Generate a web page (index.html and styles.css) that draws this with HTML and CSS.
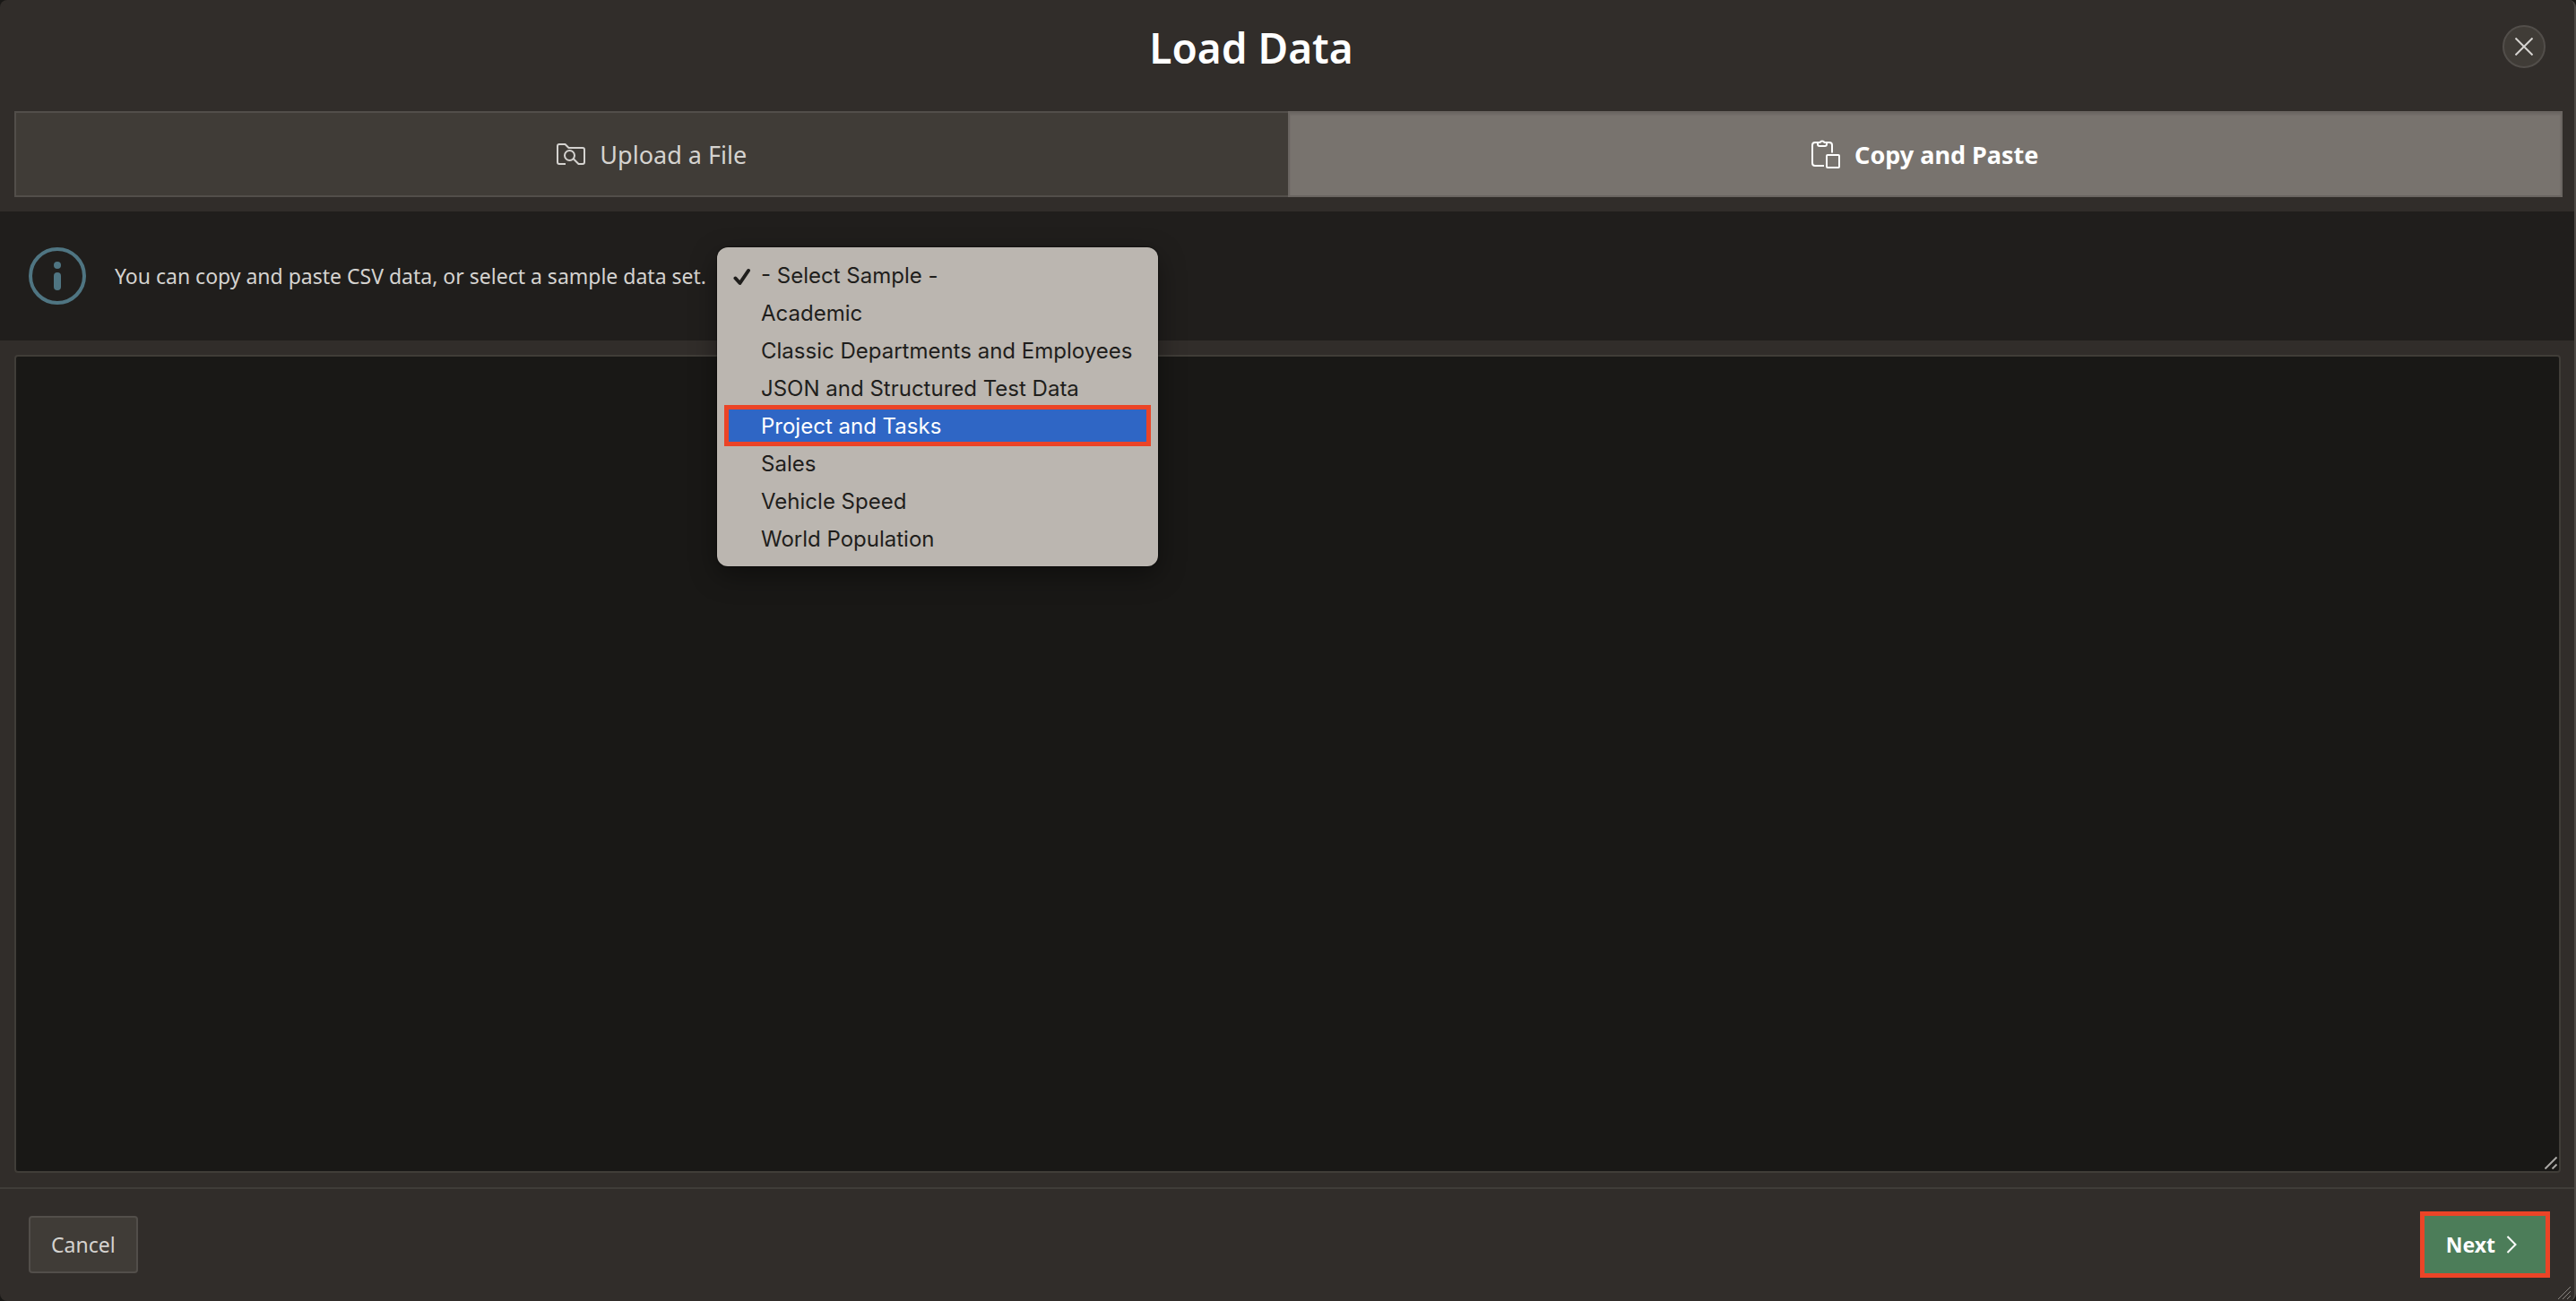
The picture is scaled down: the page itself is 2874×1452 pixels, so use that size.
FILE: index.html
```html
<!DOCTYPE html>
<html lang="en">
<head>
<meta charset="utf-8">
<title>Load Data</title>
<link rel="stylesheet" href="styles.css">
</head>
<body>
<main class="dialog" role="dialog" aria-labelledby="title">
  <header class="header">
    <h1 class="title" id="title">Load Data</h1>
    <button class="close" type="button" aria-label="Close">
      <svg width="20" height="20" viewBox="0 0 20 20" fill="none" stroke="currentColor" stroke-width="2"><path d="M0.5 0.5 19.5 19.5M19.5 0.5 0.5 19.5"/></svg>
    </button>
  </header>

  <div class="tabs" role="tablist">
    <button class="tab" type="button" role="tab" aria-selected="false">
      <svg width="32" height="32" viewBox="0 0 32 32" fill="none" stroke="currentColor" stroke-width="2" stroke-linejoin="round"><path d="M10 27H3a2 2 0 0 1-2-2V7a2 2 0 0 1 2-2h6.500l4 4H29a2 2 0 0 1 2 2v14a2 2 0 0 1-2 2h-4.500l-6-6"/><circle cx="14.500" cy="17.500" r="5.500"/></svg>
      <span>Upload a File</span>
    </button>
    <button class="tab tab-active" type="button" role="tab" aria-selected="true">
      <svg width="32" height="32" viewBox="0 0 32 32" fill="none" stroke="currentColor" stroke-width="2" stroke-linejoin="round"><path d="M14 29H4a3 3 0 0 1-3-3V6a3 3 0 0 1 3-3h3M17 3h3a3 3 0 0 1 3 3v8.500"/><path d="M7 3h2.500a2.800 2.800 0 0 1 5 0H17v2a2 2 0 0 1-2 2H9a2 2 0 0 1-2-2z"/><rect x="17" y="17" width="14" height="14" rx="1"/></svg>
      <span>Copy and Paste</span>
    </button>
  </div>

  <section class="notice">
    <svg class="info" width="64" height="64" viewBox="0 0 64 64" fill="none"><circle cx="32" cy="32" r="30" stroke="currentColor" stroke-width="4"/><circle cx="32" cy="20" r="4" fill="currentColor"/><rect x="28" y="28" width="8" height="20" rx="4" fill="currentColor"/></svg>
    <label class="notice-text" for="sample">You can copy and paste CSV data, or select a sample data set.</label>
    <div class="picker">
      <select class="menu" id="sample" size="8">
        <option>- Select Sample -</option>
        <option>Academic</option>
        <option>Classic Departments and Employees</option>
        <option>JSON and Structured Test Data</option>
        <option class="current">Project and Tasks</option>
        <option>Sales</option>
        <option>Vehicle Speed</option>
        <option>World Population</option>
      </select>
      <svg class="check" width="20" height="20" viewBox="0 0 20 20" fill="none" stroke="currentColor" stroke-width="4" stroke-linecap="round" stroke-linejoin="round"><path d="M2.500 11.500 7.500 17 17 3"/></svg>
    </div>
  </section>

  <div class="editor">
    <textarea class="data" aria-label="CSV data"></textarea>
    <svg class="grip" width="14" height="14" viewBox="0 0 14 14" stroke="currentColor" stroke-width="2"><path d="M0.500 13.500 13.500 0.500M8.500 13.500 13.500 8.500"/></svg>
  </div>

  <footer class="footer">
    <button class="button" type="button">Cancel</button>
    <button class="button button-next" type="button">Next
      <svg width="12" height="20" viewBox="0 0 12 20" fill="none" stroke="currentColor" stroke-width="2"><path d="M1.500 1 10.500 10 1.500 19"/></svg>
    </button>
    <svg class="corner" width="14" height="14" viewBox="0 0 14 14" stroke="currentColor" stroke-width="1"><path d="M0 14 14 0M5 14 14 5M10 14 14 10"/></svg>
  </footer>
</main>
</body>
</html>
```
FILE: styles.css
```css
* {
  box-sizing: border-box;
}

body {
  margin: 0;
  background: #191816;
  font-family: "Noto Sans", sans-serif;
  font-size: 23px;
  color: #d5d3d0;
}

button,
select,
textarea {
  font: inherit;
  color: inherit;
}

svg {
  flex: none;
}

.dialog {
  display: flex;
  flex-direction: column;
  min-height: 100vh;
  border-right: 2px solid #4d4945;
  border-radius: 8px;
  background: #312d2a;
}

.header {
  position: relative;
  display: flex;
  justify-content: center;
  align-items: center;
  height: 106px;
  padding-right: 80px;
  margin-bottom: 18px;
}

.title {
  margin: 0;
  font-size: 46px;
  font-weight: 600;
  line-height: 64px;
  color: #fff;
}

.close {
  position: absolute;
  top: 28px;
  right: 32px;
  display: flex;
  align-items: center;
  justify-content: center;
  width: 48px;
  height: 48px;
  padding: 0;
  border: 2px solid #524e4a;
  border-radius: 50%;
  background: #403c37;
}

.tabs {
  display: flex;
  height: 96px;
  margin: 0 13px 16px 16px;
}

.tab {
  display: flex;
  flex: 1;
  align-items: center;
  justify-content: center;
  gap: 16px;
  border: 2px solid #524e4a;
  border-right: 0;
  background: #403c37;
  font-size: 27px;
}

.tab-active {
  border: 2px solid #6a6561;
  background: #78736e;
  box-shadow: inset 0 2px 2px #6e6965;
  font-weight: 700;
  color: #fff;
}

.notice {
  display: flex;
  align-items: center;
  height: 144px;
  padding: 0 32px;
  margin-bottom: 16px;
  background: #201e1c;
}

.info {
  margin-right: 32px;
  color: #4f7582;
}

.notice-text {
  margin-right: 12px;
  white-space: nowrap;
}

.picker {
  position: relative;
  height: 64px;
}

.menu {
  position: absolute;
  z-index: 1;
  top: 0;
  left: 0;
  width: 492px;
  height: 356px;
  padding: 10px;
  border: 0;
  border-radius: 12px;
  outline: 0;
  overflow: hidden;
  background: #bbb6b0;
  box-shadow: 0 0 2px #000, 0 10px 30px rgba(0, 0, 0, 0.4);
  font-family: Inter, sans-serif;
  font-size: 24px;
  color: #1f1e1c;
}

.menu option {
  min-height: 42px;
  padding: 7px 0 0 39px;
}

.menu .current {
  outline: 5px solid #eb4427;
  outline-offset: -3px;
  background: #2f66c5;
  color: #fff;
}

.check {
  position: absolute;
  z-index: 2;
  top: 23px;
  left: 18px;
  color: #1f1e1c;
}

.editor {
  position: relative;
  display: flex;
  flex: 1;
  margin: 0 15px 16px 16px;
}

.data {
  flex: 1;
  padding: 12px;
  border: 2px solid #403d38;
  border-radius: 4px;
  resize: none;
  background: #191816;
}

.grip {
  position: absolute;
  right: 4px;
  bottom: 4px;
  color: #aaa8a5;
}

.footer {
  position: relative;
  display: flex;
  align-items: center;
  justify-content: space-between;
  height: 127px;
  padding: 0 32px 2px;
  border-top: 2px solid #403d39;
}

.button {
  height: 64px;
  padding: 0 23px;
  border: 2px solid #524e4a;
  border-radius: 4px;
  background: #403c37;
}

.button-next {
  display: flex;
  align-items: center;
  gap: 12px;
  padding: 0 32px 0 24px;
  border: 0;
  outline: 5px solid #eb4427;
  border-radius: 0;
  background: #4c7d59;
  font-weight: 700;
  color: #fff;
}

.corner {
  position: absolute;
  right: 4px;
  bottom: 2px;
  color: #8a8682;
}
```
